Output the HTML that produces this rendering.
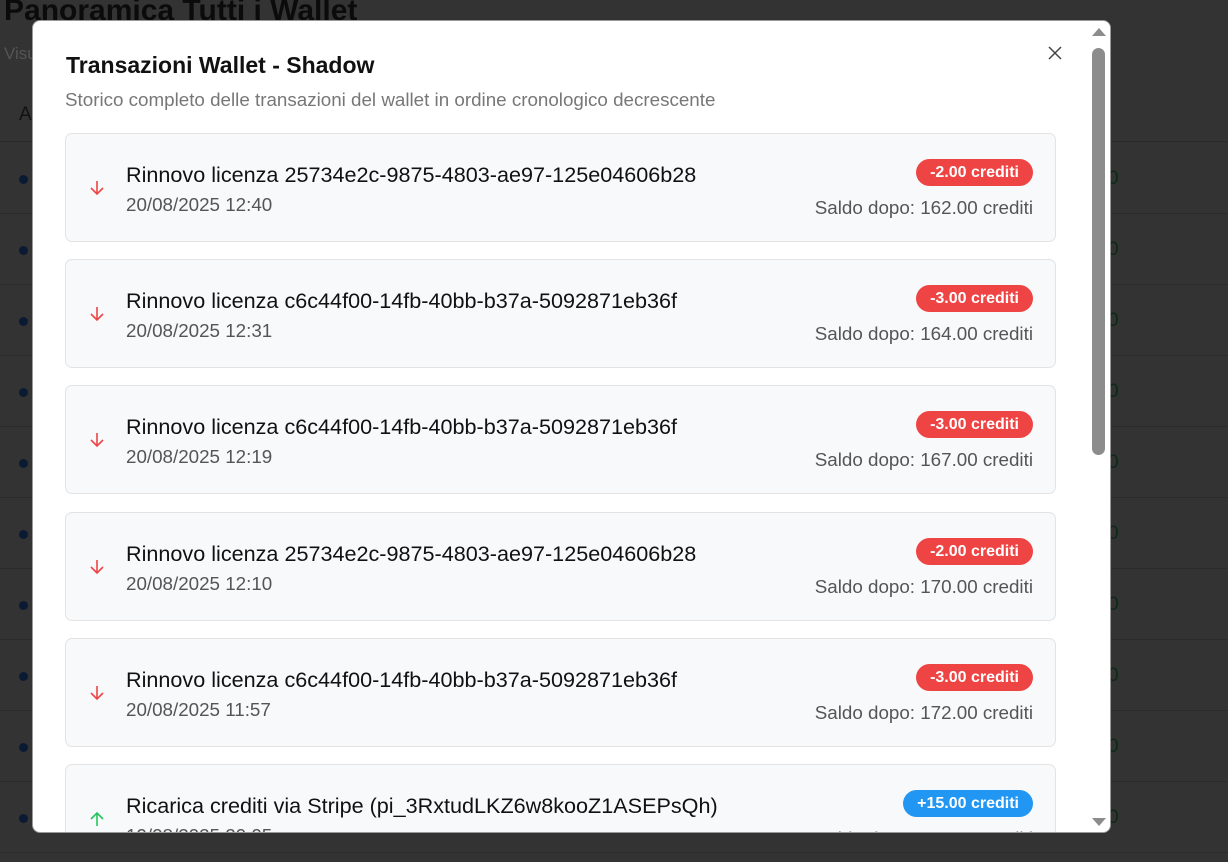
<!DOCTYPE html>
<html><head><style>
*{box-sizing:border-box;margin:0;padding:0}
body{width:1228px;height:862px;overflow:hidden;background:#333;font-family:"Liberation Sans",Arial,sans-serif;position:relative}
.bg h1{position:absolute;left:4px;top:-6px;font-size:30px;font-weight:bold;color:#0b0b0b}
.bg .sub{position:absolute;left:4px;top:44px;font-size:17px;color:#555}
.bg .th{position:absolute;left:0;top:86px;width:1228px;height:56px;border-bottom:1px solid #2a2a2a}
.bg .th span{position:absolute;top:18px;font-size:19px;color:#111}
.row{position:absolute;left:0;width:1228px;height:71px;border-bottom:1px solid #2b2b2b}
.row .dot{position:absolute;left:19px;top:32px;width:9px;height:9px;border-radius:50%;background:#0b1a33}
.row .n{position:absolute;left:1108px;top:25px;font-size:19px;color:#0b2a17}
.modal{position:absolute;left:32px;top:20px;width:1079px;height:813px;background:#fff;border-radius:8px;overflow:hidden;border:1px solid #999}
.sb{position:absolute;right:0;top:0;width:20px;height:100%;background:#fff}
.thumb{position:absolute;left:2px;top:27px;width:13px;height:407px;background:#8c8c8c;border-radius:7px}
h2{position:absolute;left:33px;top:31px;font-size:23px;font-weight:bold;color:#111}
.desc{position:absolute;left:32px;top:68px;font-size:18.8px;color:#777}
.card{position:absolute;left:32px;width:991px;height:109px;background:#f8f9fb;border:1px solid #e3e3e3;border-radius:7px}
.card .ic{position:absolute;left:23px;top:46px}
.card .t{position:absolute;left:60px;top:28px;font-size:21.6px;color:#111}
.card .d{position:absolute;left:60px;top:60px;font-size:18.8px;color:#555}
.card .b{position:absolute;right:22px;top:25px;height:27px;padding:0 14px;border-radius:14px;color:#fff;font-weight:bold;font-size:16px;line-height:27px}
.card .s{position:absolute;right:22px;top:63px;font-size:18.8px;color:#555}
</style></head><body>
<div class="bg">
<h1>Panoramica Tutti i Wallet</h1><div class="sub">Visualizza</div>
<div class="th"><span style="left:19px">A</span><span style="left:1100px">e</span></div>
<div class="row" style="top:143px"><div class="dot"></div><div class="n">0</div></div>
<div class="row" style="top:214px"><div class="dot"></div><div class="n">0</div></div>
<div class="row" style="top:285px"><div class="dot"></div><div class="n">0</div></div>
<div class="row" style="top:356px"><div class="dot"></div><div class="n">0</div></div>
<div class="row" style="top:427px"><div class="dot"></div><div class="n">0</div></div>
<div class="row" style="top:498px"><div class="dot"></div><div class="n">0</div></div>
<div class="row" style="top:569px"><div class="dot"></div><div class="n">0</div></div>
<div class="row" style="top:640px"><div class="dot"></div><div class="n">0</div></div>
<div class="row" style="top:711px"><div class="dot"></div><div class="n">0</div></div>
<div class="row" style="top:782px"><div class="dot"></div><div class="n">0</div></div>
</div>
<div class="modal">
<h2>Transazioni Wallet - Shadow</h2>
<div class="desc">Storico completo delle transazioni del wallet in ordine cronologico decrescente</div>
<svg style="position:absolute;left:1015px;top:25px" width="14" height="14" viewBox="0 0 14 14" stroke="#444" stroke-width="1.5"><path d="M1 1L13 13M13 1L1 13"/></svg>
<div class="card" style="top:112px"><svg class="ic" width="16" height="16" viewBox="0 0 16 16" fill="none" stroke="#ef4444" stroke-width="1.6"><path d="M8 1v13M2 8l6 6 6-6"/></svg><div class="t">Rinnovo licenza 25734e2c-9875-4803-ae97-125e04606b28</div><div class="d">20/08/2025 12:40</div><div class="b" style="background:#ef4444">-2.00 crediti</div><div class="s">Saldo dopo: 162.00 crediti</div></div>
<div class="card" style="top:238px"><svg class="ic" width="16" height="16" viewBox="0 0 16 16" fill="none" stroke="#ef4444" stroke-width="1.6"><path d="M8 1v13M2 8l6 6 6-6"/></svg><div class="t">Rinnovo licenza c6c44f00-14fb-40bb-b37a-5092871eb36f</div><div class="d">20/08/2025 12:31</div><div class="b" style="background:#ef4444">-3.00 crediti</div><div class="s">Saldo dopo: 164.00 crediti</div></div>
<div class="card" style="top:364px"><svg class="ic" width="16" height="16" viewBox="0 0 16 16" fill="none" stroke="#ef4444" stroke-width="1.6"><path d="M8 1v13M2 8l6 6 6-6"/></svg><div class="t">Rinnovo licenza c6c44f00-14fb-40bb-b37a-5092871eb36f</div><div class="d">20/08/2025 12:19</div><div class="b" style="background:#ef4444">-3.00 crediti</div><div class="s">Saldo dopo: 167.00 crediti</div></div>
<div class="card" style="top:491px"><svg class="ic" width="16" height="16" viewBox="0 0 16 16" fill="none" stroke="#ef4444" stroke-width="1.6"><path d="M8 1v13M2 8l6 6 6-6"/></svg><div class="t">Rinnovo licenza 25734e2c-9875-4803-ae97-125e04606b28</div><div class="d">20/08/2025 12:10</div><div class="b" style="background:#ef4444">-2.00 crediti</div><div class="s">Saldo dopo: 170.00 crediti</div></div>
<div class="card" style="top:617px"><svg class="ic" width="16" height="16" viewBox="0 0 16 16" fill="none" stroke="#ef4444" stroke-width="1.6"><path d="M8 1v13M2 8l6 6 6-6"/></svg><div class="t">Rinnovo licenza c6c44f00-14fb-40bb-b37a-5092871eb36f</div><div class="d">20/08/2025 11:57</div><div class="b" style="background:#ef4444">-3.00 crediti</div><div class="s">Saldo dopo: 172.00 crediti</div></div>
<div class="card" style="top:743px"><svg class="ic" width="16" height="16" viewBox="0 0 16 16" fill="none" stroke="#22c55e" stroke-width="1.6"><path d="M8 15V2M2 8l6-6 6 6"/></svg><div class="t">Ricarica crediti via Stripe (pi_3RxtudLKZ6w8kooZ1ASEPsQh)</div><div class="d">19/08/2025 20:05</div><div class="b" style="background:#2196f3">+15.00 crediti</div><div class="s">Saldo dopo: 175.00 crediti</div></div>
<div class="sb"><svg style="position:absolute;left:2px;top:6px" width="14" height="10"><path d="M0 9L7 1 14 9Z" fill="#8c8c8c"/></svg><div class="thumb"></div><svg style="position:absolute;left:2px;top:796px" width="14" height="10"><path d="M0 1L7 9 14 1Z" fill="#8c8c8c"/></svg></div>
</div>
</body></html>
